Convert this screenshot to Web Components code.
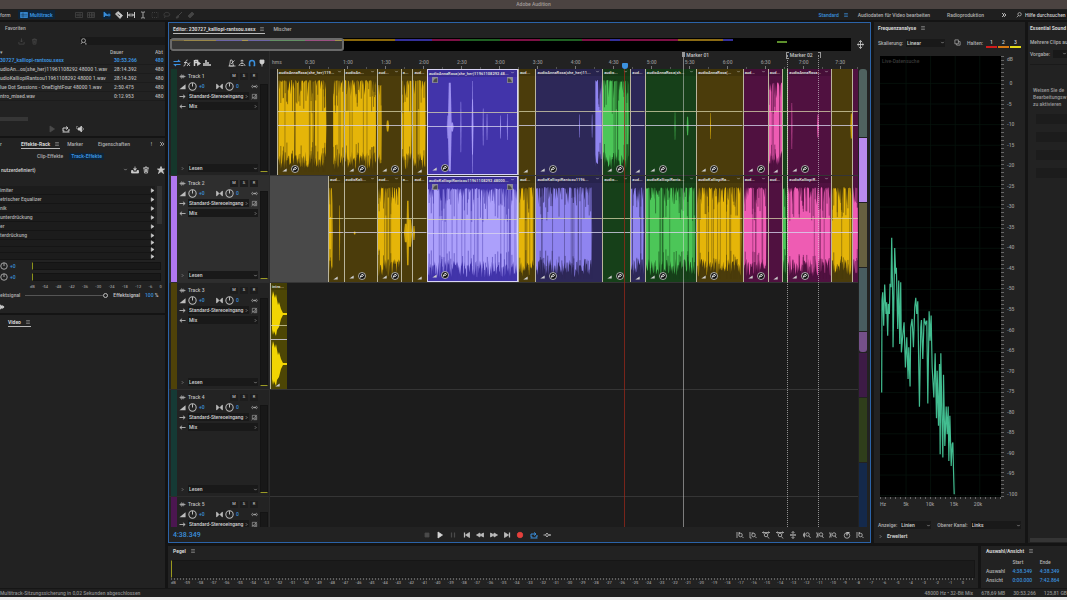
<!DOCTYPE html>
<html lang="de">
<head>
<meta charset="utf-8">
<meta name="viewport" content="width=device-width, initial-scale=1">
<title>Adobe Audition</title>
<style>
    html, body { margin: 0; height: 100%; background: #141414; }
    body {
        font-family: Roboto, "Liberation Sans", sans-serif;
        font-size: 5px;
        line-height: 8px;
        font-weight: 500;
        color: #b0b0b0;
        --panel: #222222;
        --dark: #191919;
        --blue: #3a8fdc;
    }
</style>
</head>
<body>
<audition-app></audition-app>

<script>
const ICONS = {
    menu: '<path d="M3 4h10M3 8h10M3 12h10"/>',
    down: '<path d="M4 6l4 4 4-4"/>',
    right: '<path d="M6 4l4 4-4 4"/>',
    more: '<path d="M3 3l5 5-5 5M8 3l5 5-5 5" stroke-width="2.4"/>',
    search: '<circle cx="9.500" cy="6" r="4.500"/><path d="M6.500 9.500L2 14"/>',
    find: '<circle cx="8" cy="6" r="4.500"/><path d="M5 9.500L2 14M11 10l3 3.500M12 14h3"/>',
    multitrack: '<path d="M1 3h14v10H1z" fill="currentColor"/><path d="M1 6.500h14M1 10h14M6 3v10" stroke="#0e2439" stroke-width="1"/>',
    wave: '<path d="M1 3h14v10H1zM4 6v4M6 5v6M8 6v4M10 4v8M12 6v4"/>',
    spectral: '<path d="M1 3h14v10H1zM1 8h14M5 3v10M9 3v10M12 3v10"/>',
    move: '<path d="M2 2v10l3-3h5z" fill="currentColor"/><path d="M9 8h6M12 5v6" stroke-width="2"/>',
    razor: '<path d="M1 6l5-5 9 8-5 6z" fill="currentColor"/><path d="M5 6l5 4" stroke="#222"/>',
    slip: '<path d="M1 2v12M15 2v12M3 8h10M6 5L3 8l3 3M10 5l3 3-3 3" stroke-width="2"/>',
    ibeam: '<path d="M4 2h3l1 1 1-1h3M4 14h3l1-1 1 1h3M8 3v10"/>',
    marquee: '<path d="M2 3h12v10H2z" stroke-dasharray="2 2"/>',
    lasso: '<path d="M3 10C0 6 4 2 9 3s6 6 2 7-5 0-7 0l-1 4"/>',
    brush: '<path d="M14 2L7 9M7 9c-3 0-3 3-5 5 4 0 6-1 5-5z" fill="currentColor" stroke-width="2"/>',
    heal: '<path d="M2 10l8-8 4 4-8 8z" fill="currentColor"/>',
    importer: '<path d="M8 1v8M5 6l3 3 3-3M2 9v5h12V9"/>',
    save: '<path d="M8 1v7M5 5l3 4 3-4" fill="currentColor"/><path d="M1 9h3v3h8V9h3v5H1z" fill="currentColor"/>',
    trash: '<path d="M2 4h12M6 4V2h4v2M4 4l1 10h6l1-10M7 6v6M9 6v6"/>',
    star: '<path d="M8 1l2 5h5l-4 3 2 6-5-4-5 4 2-6-4-3h5z" fill="currentColor"/>',
    play: '<path d="M4 2l9 6-9 6z" fill="currentColor"/>',
    stop: '<path d="M4 4h8v8H4z" fill="currentColor"/>',
    pause: '<path d="M5 3v10M11 3v10" stroke-width="2.5"/>',
    first: '<path d="M3 3v10" stroke-width="2.5"/><path d="M13 3v10L5 8z" fill="currentColor"/>',
    last: '<path d="M13 3v10" stroke-width="2.5"/><path d="M3 3v10l8-5z" fill="currentColor"/>',
    rewind: '<path d="M8 4v8L1 8zM15 4v8L8 8z" fill="currentColor"/>',
    forward: '<path d="M1 4v8l7-4zM8 4v8l7-4z" fill="currentColor"/>',
    record: '<circle cx="8" cy="8" r="5.500" fill="currentColor"/>',
    loop: '<path d="M5 12H2V6h9M11 12h3V8M8 3l4 3-4 3M1 14h14" stroke-width="2"/>',
    skip: '<path d="M1 8h4M11 8h4M8 4L5 8l3 4 3-4zM13 6l2 2-2 2" stroke-width="1.800"/>',
    speaker: '<path d="M4 6h3l4-4v12l-4-4H4z" fill="currentColor"/><path d="M13 5c2 2 2 4 0 6M1 2l2 2M0 6h2"/>',
    input: '<path d="M1 8h13M9 4l5 4-5 4" stroke-width="2"/>',
    output: '<path d="M2 8h13M7 4L2 8l5 4" stroke-width="2"/>',
    swap: '<path d="M1 5h12l-3-3M15 11H3l3 3" stroke-width="2.200"/>',
    fx: '<path d="M1 14c3 1 3-3 4-7s2-5 4-5M2 7h6M8 7l6 7M14 7l-6 7" stroke-width="1.800"/>',
    send: '<path d="M3 2v12M4 3h5v4H4" stroke-width="3"/><path d="M9 5l6 4-6 4z" fill="currentColor"/>',
    bars: '<path d="M2 14V8M6 14V2M10 14V6M14 14v-4" stroke-width="3"/>',
    metronome: '<path d="M3 14L5 2h3l3 12zM6 10l7-7M1 14h14"/>',
    snap: '<path d="M2 14c0-7 12-7 12 0M8 9V2M5 4l3-2 3 2M5 13h6"/>',
    magnet: '<path d="M3 14V8c0-7 10-7 10 0v6M2 13h3M11 13h3" stroke-width="3"/>',
    marker: '<path d="M4 2h8v5l-2 3H6L4 7z" fill="currentColor"/><path d="M8 9v6"/>',
    track: '<path d="M1 8h14M4 5v6M6 3v10M8 5v6M10 4v8M12 6v4" stroke-width="1.400"/>',
    volume: '<path d="M1 14L15 3v11z" fill="currentColor" stroke="none"/>',
    pan: '<path d="M2 3v10l5-5zM14 3v10L9 8z" fill="currentColor"/><path d="M1 2v12M15 2v12"/>',
    knob: '<circle cx="8" cy="8" r="6.500" stroke-width="1.800"/><path d="M8 8V2" stroke-width="1.800"/>',
    mono: '<path d="M4 5C1 6 1 10 4 11M12 5c3 1 3 5 0 6M5 8h6M7 6v4M10 6v4"/>',
    phase: '<path d="M3 3h8v8H3zM14 2L1 14M13 5v8H6" stroke-width="1.200"/>',
    ramp: '<path d="M1 14L15 5v9z" fill="currentColor" stroke="none"/>',
    stretch: '<circle cx="8" cy="8" r="7" fill="#101010" stroke="#d9d9d9" stroke-width="1.500"/><path d="M5 11c0-4 1-6 5-6 2 2 0 5-5 4" stroke="#fff" stroke-width="1.800"/>',
    corner: '<path d="M1 1h14v14H1z" fill="#8b8b8b" stroke="#aaa"/><path d="M3 14C4 7 8 3 14 3v11z" fill="#4a4a4a" stroke="none"/>',
    cornerOut: '<path d="M1 1h14v14H1z" fill="#8b8b8b" stroke="#aaa"/><path d="M13 14C12 7 8 3 2 3v11z" fill="#4a4a4a" stroke="none"/>',
    copy: '<path d="M2 2h8v9H2zM6 11v3h8V6h-4"/>',
    pin: '<path d="M8 1v14M2 8h12M5 4l3-3 3 3M5 12l3 3 3-3M4 6v4M12 6v4" stroke-width="1.500"/>',
    zoomIn: '<path d="M2 2v12M5 4h3M6.500 2v4"/><circle cx="9" cy="8" r="3.500"/><path d="M12 11l3 3"/>',
    zoomOut: '<path d="M2 2v12M5 4h4M2 14h3"/><circle cx="9" cy="8" r="3.500"/><path d="M12 11l3 3"/>',
    zoomTime: '<path d="M1 3h14M3 1L1 3l2 2M13 1l2 2-2 2"/><circle cx="8" cy="8" r="3.500"/><path d="M11 11l3 4"/>',
    zoomLeft: '<path d="M3 3v10M1 5v6"/><circle cx="9" cy="7" r="3.500"/><path d="M12 10l3 4"/>',
    zoomSel: '<path d="M1 3l2 5-2 5M4 3v10"/><circle cx="10" cy="7" r="3.500"/><path d="M12 10l3 4"/>',
    clock: '<circle cx="8" cy="9" r="5.500"/><path d="M8 9V3h5" stroke-width="2.500"/>',
    diamond: '<path d="M1 2v12l6-6z" fill="currentColor"/><path d="M7 4l4 4-4 4z" fill="currentColor"/>'
};

const RESET = `
    :host, * { box-sizing: border-box; }
    button, select, input {
        font: inherit; color: inherit; line-height: inherit; text-align: left;
        border: 0; background: none; padding: 0; margin: 0; border-radius: 0;
        appearance: none; min-width: 0; outline: 0;
    }
    input::-webkit-search-cancel-button { display: none; }
    button { display: flex; align-items: center; justify-content: center; }
    a { color: inherit; text-decoration: none; }
    .row { display: flex; align-items: center; }
    .grow { flex: 1; min-width: 0; }
    .blue { color: var(--blue); }
    .dim { color: #4a4a4a; }
    .bright { color: #d6d6d6; }
`;

class AuElement extends HTMLElement {
    connectedCallback() {
        if (this.shadowRoot) return;
        this.attachShadow({ mode: 'open' });
        this.shadowRoot.innerHTML = `<style>${RESET}${this.css()}</style>${this.html()}`;
    }
    css() { return ''; }
    html() { return '<slot></slot>'; }
}

class AuIcon extends AuElement {
    css() {
        return `
            :host { display: inline-flex; flex: none; width: var(--icon, 7px); height: var(--icon, 7px); }
            svg { width: 100%; height: 100%; }
        `;
    }
    html() {
        return `<svg viewBox="0 0 16 16" fill="none" stroke="currentColor" stroke-width="1.600" aria-hidden="true">${ICONS[this.getAttribute('name')]}</svg>`;
    }
}

const icon = name => `<au-icon name="${name}"></au-icon>`;

class AuTab extends AuElement {
    css() {
        return `
            :host { display: block; --icon: 6px; }
            button { gap: 4px; height: 10px; white-space: nowrap; border-bottom: 1px solid transparent; }
            :host([active]) button { color: #d6d6d6; font-weight: 700; }
            :host([underline]) button { border-color: #b9b9b9; }
            au-icon { color: #999; }
        `;
    }
    html() {
        return `<button type="button"><slot></slot>${this.hasAttribute('active') ? icon('menu') : ''}</button>`;
    }
}

class AuSelect extends AuElement {
    css() {
        return `
            :host { display: flex; align-items: center; background: var(--dark); height: 8px; min-width: 0; padding: 0 0 0 1px; color: #d2d2d2; --icon: 5px; }
            select { flex: 1; height: 8px; text-overflow: clip; }
        `;
    }
    html() {
        return `
            <select aria-label="${this.getAttribute('label')}"><option>${this.getAttribute('value')}</option></select>
            ${icon(this.getAttribute('arrow') || 'down')}
        `;
    }
}

class AppToolbar extends AuElement {
    css() {
        return `
            :host { display: flex; align-items: center; height: 11px; background: #1f1f1f; white-space: nowrap; --icon: 8px; }
            .mode { height: 9px; padding: 0 2px; gap: 2px; background: #0e2439; color: var(--blue); font-weight: 700; margin: 0 20px 0 7px; }
            .tools { display: flex; gap: 4px; color: #c9c9c9; }
            .tools .dim { color: #444; }
            .tools .on { background: #0e2439; color: var(--blue); }
            nav { display: flex; align-items: center; gap: 9px; margin-left: auto; --icon: 6px; }
            nav .gap { margin-left: 8px; }
            .help { display: flex; align-items: center; gap: 3px; width: 51px; color: #ddd; }
            input { flex: 1; background: var(--dark); height: 9px; }
            input::placeholder { color: #d0d0d0; opacity: 1; }
        `;
    }
    html() {
        const tool = (name, label, cls = '') => `<button type="button" class="${cls}" aria-label="${label}">${icon(name)}</button>`;
        return `
            <span>form</span>
            <button type="button" class="mode">${icon('multitrack')}Multitrack</button>
            <div class="tools">
                ${tool('wave', 'Wellenform', 'dim')}${tool('spectral', 'Spektral', 'dim')}<span></span>
                ${tool('move', 'Verschieben', 'on')}${tool('razor', 'Rasierklinge')}${tool('slip', 'Unterschieben')}${tool('ibeam', 'Zeitauswahl')}
                ${tool('marquee', 'Auswahlrechteck', 'dim')}${tool('lasso', 'Lasso', 'dim')}${tool('brush', 'Pinsel', 'dim')}${tool('heal', 'Reparatur', 'dim')}
            </div>
            <nav>
                <a href="#" class="blue row" style="gap:4px">Standard ${icon('menu')}</a>
                <a href="#">Audiodaten für Video bearbeiten</a>
                <a href="#" class="gap">Radioproduktion</a>
                <button type="button" class="gap bright" aria-label="Mehr">${icon('more')}</button>
                <label class="help">${icon('search')}<input type="search" placeholder="Hilfe durchsuchen" aria-label="Hilfe durchsuchen"></label>
            </nav>
        `;
    }
}

class FilesPanel extends AuElement {
    css() {
        return `
            :host { display: flex; flex-direction: column; height: 114px; background: var(--panel); overflow: hidden; white-space: nowrap; }
            .tab { padding: 2px 0 0 5px; height: 14px; }
            .find { height: 10px; gap: 6px; padding-left: 18px; }
            .find label { display: flex; align-items: center; flex: 1; margin-left: 36px; background: var(--dark); color: #ccc; height: 8px; --icon: 7px; }
            table { width: 100%; height: 51px; margin-top: 2px; border-collapse: collapse; table-layout: fixed; }
            th, td { padding: 0; text-align: left; font-weight: 500; overflow: hidden; line-height: 8px; border-bottom: 1px solid #1c1c1c; }
            td { color: #b6b6b6; }
            td:nth-child(2) { padding-left: 4px; }
            th { border: 0; }
            tr.open td { color: var(--blue); font-weight: 700; }
            .bar { height: 4px; width: 28px; background: #363636; margin-top: auto; }
            .play { height: 15px; gap: 6px; padding-left: 48px; color: #ccc; --icon: 8px; }
        `;
    }
    html() {
        const files = [
            ['30727_kalliopi-rantsou.sesx', '30:53.266'],
            ['udioAn...os(she_her)11961108292 48000 1.wav', '28:14.392'],
            ['udioKalliopiRantsou11961108292 48000 1.wav', '28:14.392'],
            ['lue Dot Sessions - OneEightFour 48000 1.wav', '2:50.475'],
            ['ntro_mixed.wav', '0:12.953']
        ];
        return `
            <div class="tab">Favoriten</div>
            <div class="row find dim">${icon('importer')}${icon('trash')}
                <label>${icon('find')}<input type="search" aria-label="Dateien suchen"></label>
            </div>
            <table>
                <colgroup><col><col style="width:45px"><col style="width:10px"></colgroup>
                <thead><tr><th>▾</th><th>Dauer</th><th>Abt</th></tr></thead>
                <tbody>${files.map((f, i) => `<tr class="${i ? '' : 'open'}"><td>${f[0]}</td><td>${f[1]}</td><td>480</td></tr>`).join('')}</tbody>
            </table>
            <div class="bar"></div>
            <div class="row play">
                <button type="button" class="dim" aria-label="Wiedergabe">${icon('play')}</button>
                <button type="button" aria-label="Schleife">${icon('loop')}</button>
                <button type="button" aria-label="Automatische Wiedergabe">${icon('speaker')}</button>
            </div>
        `;
    }
}

class EffectsRack extends AuElement {
    css() {
        return `
            :host { display: flex; flex-direction: column; height: 175px; background: var(--panel); overflow: hidden; white-space: nowrap; }
            .tabs { height: 12px; gap: 7px; --icon: 6px; }
            .sub { height: 12px; padding-left: 35px; gap: 4px; }
            .sub button { height: 7px; padding: 0 2px; }
            .sub .on { background: #0e2439; color: var(--blue); font-weight: 700; }
            .preset { height: 15px; gap: 3px; color: #ccc; --icon: 8px; }
            .preset au-select { width: 129px; background: none; }
            .preset au-icon:last-child { margin-left: 4px; }
            .list { display: flex; height: 74px; margin-top: 9px; }
            ul { flex: 1; margin: 0; padding: 0; list-style: none; display: flex; flex-direction: column; background: #1c1c1c; }
            li { flex: 1; display: flex; align-items: center; justify-content: space-between; border-bottom: 1px solid #151515; --icon: 5px; }
            li au-icon { color: #d0d0d0; }
            .thumb { width: 5px; height: 38px; margin: 0 3px 0 2px; background: #333; }
            .level { height: 11px; gap: 2px; --icon: 8px; }
            .level .blue { width: 20px; }
            .level div { flex: 1; height: 8px; margin-right: 4px; background: var(--dark); border: 1px solid #131313; border-left: 1px solid #8d9419; }
            .scale { display: flex; justify-content: space-between; padding: 0 3px 0 30px; font-size: 4px; height: 9px; align-items: end; color: #999; }
            .mix { height: 8px; gap: 5px; }
            .mix input { flex: 1; height: 6px; background: linear-gradient(#555, #555) center / 100% 1px no-repeat; }
            .mix input::-webkit-slider-thumb { appearance: none; width: 5px; height: 5px; border: 1px solid #bbb; border-radius: 50%; background: var(--panel); }
            .mix .bright { color: #ccc; }
            .end { margin-top: 5px; color: #ddd; --icon: 6px; }
        `;
    }
    html() {
        const rows = ['imiter', 'etrischer Equalizer', 'nik', 'unterdrückung', 'er', 'terdrückung', '', '', ''];
        const scale = ['dB', -54, -48, -42, -36, -30, -24, -18, -12, -6, 0];
        return `
            <div class="row tabs"><span style="width:14px">r</span><au-tab active underline>Effekte-Rack</au-tab><au-tab>Marker</au-tab>
                <au-tab class="grow" style="margin-left:8px">Eigenschaften</au-tab><span>!</span>${icon('more')}</div>
            <div class="row sub"><button type="button">Clip-Effekte</button><button type="button" class="on">Track-Effekte</button></div>
            <div class="row preset"><au-select label="Vorgabe" value="nutzerdefiniert)"></au-select>${icon('save')}${icon('trash')}${icon('star')}</div>
            <div class="list"><ul>${rows.map(r => `<li><span>${r}</span>${icon('play')}</li>`).join('')}</ul><div class="thumb"></div></div>
            <div>
                <div class="row level">${icon('knob')}<span class="blue">+0</span><div></div></div>
                <div class="row level">${icon('knob')}<span class="blue">+0</span><div></div></div>
            </div>
            <div class="scale">${scale.map(s => `<span>${s}</span>`).join('')}</div>
            <label class="row mix">ektsignal<input type="range" value="100" aria-label="Effektsignal">
                <span class="bright">Effektsignal</span><span class="bright" style="width:20px"><span class="blue">100</span> %</span></label>
            <div class="end">${icon('diamond')}</div>
        `;
    }
}

class TrackHeader extends AuElement {
    css() {
        return `
            :host { display: flex; flex: none; height: 107px; background: #232323; border-bottom: 1px solid #2d2d2d; color: #bdbdbd; --icon: 7px; }
            :host([selected]) { background: #2e2e2e; }
            .strip { width: 6px; margin-left: 2px; background: var(--track); }
            .body { flex: 1; display: flex; flex-direction: column; padding: 2px 2px 2px 2px; min-width: 0; }
            .row { height: 10px; gap: 2px; }
            .lead { width: 7px; display: flex; justify-content: center; }
            .btn { width: 8px; height: 7px; background: #1d1d1d; font-size: 4px; }
            .knob { --icon: 9px; display: flex; }
            .val { width: 15px; color: var(--blue); }
            .last { margin-top: auto; }
            .meter { width: 8px; margin: 15px 1px 3px 0; background: #181818; border: 1px solid #141414; border-bottom: 1px solid #9b9a25; }
        `;
    }
    html() {
        return `
            <div class="strip"></div>
            <div class="body">
                <div class="row">${icon('track')}<span class="grow">${this.getAttribute('name')}</span>
                    <button type="button" class="btn">M</button><button type="button" class="btn">S</button><button type="button" class="btn">R</button></div>
                <div class="row">${icon('volume')}<span class="knob">${icon('knob')}</span><span class="val">+0</span>
                    ${icon('pan')}<span class="knob">${icon('knob')}</span><span class="val grow">0</span>${icon('mono')}</div>
                <div class="row">${icon('input')}<au-select class="grow" label="Eingang" value="Standard-Stereoeingang" arrow="right"></au-select>${icon('phase')}</div>
                <div class="row">${icon('output')}<au-select class="grow" label="Ausgang" value="Mix" arrow="right"></au-select></div>
                <div class="row last"><span class="lead" style="--icon:5px">${icon('right')}</span><au-select class="grow" label="Automatisierung" value="Lesen"></au-select></div>
            </div>
            <div class="meter"></div>
        `;
    }
}

const COLORS = {
    y: ['#4b3c0b', '#e5b509'],
    p: ['#4234aa', '#aca0fb'],
    i: ['#2d2858', '#8f84f0'],
    g: ['#164019', '#4cc658'],
    m: ['#501140', '#ee5cb3'],
    a: ['#4d4605', '#f2d503']
};

function randomFrom(seed) {
    let s = seed * 7919 + 13;
    return () => (s = (s * 16807) % 2147483647) / 2147483647;
}

// Vertical needle shapes for dense passages, single slim diamonds for short peaks
function waveform(clip, seed) {
    const [bg, fg] = COLORS[clip.color];
    const rnd = randomFrom(seed);
    const mid = 57;
    let out = '';
    for (const [from, to, amp = 1] of clip.dense || []) {
        let top = '', bottom = '';
        for (let x = from; x <= to; x += 0.6) {
            const h = rnd() < 0.7 ? 0.96 + rnd() * 0.04 : 0.6 + rnd() * 0.35;
            const l = 0.55 + rnd() * 0.4;
            top += `L${x.toFixed(1)} ${(mid - 46 * amp * h).toFixed(1)}`;
            bottom = `L${x.toFixed(1)} ${(mid + 46 * amp * l).toFixed(1)}` + bottom;
        }
        out += `<path fill="${fg}" d="M${from} ${mid}${top}L${to} ${mid}${bottom}Z"/>`;
        for (let n = 0; n < (to - from) / 1.5; n++) {
            const x = from + rnd() * (to - from);
            const full = rnd() < 0.3;
            const y1 = mid - 47, y2 = full ? mid + 46 : mid - 12 - rnd() * 25;
            out += `<path stroke="${bg}" stroke-width=".7" opacity="${full ? 0.6 : 0.8}" d="M${x.toFixed(1)} ${y1}V${y2}"/>`;
            if (!full) out += `<path stroke="${bg}" stroke-width=".7" opacity=".8" d="M${x.toFixed(1)} ${mid + 46}V${mid + 16 + rnd() * 22}"/>`;
        }
    }
    for (const [x, amp, w = 1] of clip.peaks || []) {
        const h = 46 * amp;
        out += `<path fill="${fg}" opacity=".85" d="M${x - w / 4} ${mid - h}h${w / 2}L${x + w / 2} ${mid}L${x + w / 4} ${mid + h}h${-w / 2}L${x - w / 2} ${mid}Z"/>`;
    }
    if (clip.stereo) {
        for (const y of [31, 81]) {
            out += `<path fill="${fg}" d="M1 ${y - 17}L2 ${y - 23}L4 ${y - 16}L5 ${y - 20}L7 ${y - 9}L8 ${y - 12}L10 ${y - 5}L12 ${y - 1}H16V${y + 1}H12L10 ${y + 5}L8 ${y + 13}L6 ${y + 16}L5 ${y + 22}L3 ${y + 17}L2 ${y + 21}L1 ${y + 15}Z"/>`;
        }
    }
    return out;
}

class AuClip extends AuElement {
    css() {
        const [bg] = COLORS[this.clip.color];
        return `
            :host { display: block; position: relative; flex: ${this.clip.w} 1 0; min-width: 0; background: ${bg}; border-left: 1px solid #b9b49c; overflow: hidden; }
            :host([selected]) { border: 1px solid #d9d5f5; }
            svg.wave { position: absolute; inset: 0; width: 100%; height: 106px; }
            .name { position: relative; display: flex; justify-content: space-between; height: 7px; padding: 0 2px 0 1px; font-size: 4px; font-weight: 700; line-height: 7px; white-space: nowrap; color: #d8d8d8; background: rgba(0, 0, 0, .12); --icon: 5px; }
            .foot { position: absolute; left: 4px; bottom: 2px; display: flex; align-items: center; gap: 4px; color: #ccc; }
            .foot > :first-child { --icon: 5px; }
            .foot > :last-child:not(:first-child) { --icon: 8px; }
            .corners { position: relative; display: flex; justify-content: space-between; padding: 0 4px; --icon: 6px; }
        `;
    }
    html() {
        const c = this.clip;
        return `
            <svg class="wave" viewBox="0 0 ${c.w} 106" preserveAspectRatio="none" aria-hidden="true">${waveform(c, c.seed)}
                <path d="M0 42.500H${c.w}" stroke="#dcd9ae" stroke-width="1" opacity=".75"/>
                <path d="M0 56.500H${c.w}" stroke="#d7d4ee" stroke-width="1" opacity=".8"/></svg>
            ${c.name ? `<div class="name"><span>${c.name}</span>${c.w > 20 ? icon('down') : ''}</div>` : ''}
            ${c.color === 'p' ? `<div class="corners">${icon('corner')}${icon('cornerOut')}</div>` : ''}
            ${c.name && c.w > 11 ? `<div class="foot">${icon('ramp')}${c.w > 20 ? icon('stretch') : ''}</div>` : ''}
        `;
    }
}

const LANES = [
    [
        { gap: 7 },
        { w: 68, color: 'y', name: 'audioAnnaRosa(she_her)119...', dense: [[0, 17], [18, 37], [38, 50], [57, 68]] },
        { w: 33, color: 'y', name: 'audioAn...', dense: [[0, 32]] },
        { w: 24, color: 'y', name: 'aud...', dense: [[0, 4, .9]], peaks: [[10, .12, 3]] },
        { w: 11, color: 'y', name: 'a...', dense: [[0, 10]] },
        { w: 14, color: 'y', name: 'aud...', dense: [[0, 13]] },
        { w: 92, color: 'p', name: 'audioAnnaRosa(she_her)11961108292 48...', peaks: [[20, .25], [22.5, .96, 4], [25, .1, 3], [34, .55], [46, .6, 2], [46, 1], [57, .4], [61, .28], [75, .25], [82, .28]] },
        { w: 17, color: 'y', name: 'aud...' },
        { w: 68, color: 'i', name: 'audioAnnaRosa(she_her)11...', peaks: [[45, .25], [58, .25]], dense: [[61, 68]] },
        { w: 28, color: 'g', name: 'audio...', dense: [[0, 27]] },
        { w: 14, color: 'i', name: 'aud...' },
        { w: 52, color: 'g', name: 'audioAnnaRosa(sh...', peaks: [[30, .3], [43, .2, 2]] },
        { w: 47, color: 'y', name: 'audioAnnaRosa(...', peaks: [[14, .28]] },
        { w: 25, color: 'm', name: 'aud...' },
        { w: 14, color: 'm', name: 'aud...', dense: [[0, 14, .95]] },
        { w: 4, color: 'g' },
        { w: 44, color: 'm', name: 'audioAnnaRosa...', peaks: [[4, .5], [31, .25, 2]] },
        { w: 21, color: 'y', peaks: [[20, .27, 2]] },
        { w: 5, color: 'm' }
    ],
    [
        { gap: 60, fill: '#494949' },
        { w: 15, color: 'y', name: 'aud...', dense: [[0, 4]], peaks: [[11, .6]] },
        { w: 33, color: 'y', name: 'audioKali...', peaks: [[10, .03, 2]] },
        { w: 24, color: 'y', name: 'aud...', dense: [[0, 23]] },
        { w: 11, color: 'y', name: 'a...', peaks: [[4, .2, 4], [6, .7, 3], [8, .3, 5]] },
        { w: 14, color: 'y', name: 'aud...', peaks: [[1, .15, 2]] },
        { w: 92, color: 'p', name: 'audioKalliopiRantsou11961108292 48000...', dense: [[0, 92]] },
        { w: 17, color: 'y', name: 'aud...', dense: [[0, 15]] },
        { w: 68, color: 'i', name: 'audioKalliopiRantsou1196...', dense: [[0, 58]] },
        { w: 28, color: 'g', name: 'audio...' },
        { w: 14, color: 'i', name: 'aud...', dense: [[0, 13]] },
        { w: 52, color: 'g', name: 'audioKalliopiRants...', dense: [[0, 51]] },
        { w: 47, color: 'y', name: 'audioKalliopiRa...', dense: [[0, 46]] },
        { w: 25, color: 'm', name: 'aud...', dense: [[0, 23]] },
        { w: 14, color: 'm', name: 'aud...' },
        { w: 4, color: 'g', dense: [[0, 3]] },
        { w: 44, color: 'm', name: 'audioKalliopiR...', dense: [[0, 44]] },
        { w: 21, color: 'y', dense: [[0, 20]] },
        { w: 5, color: 'm', dense: [[0, 5]] }
    ],
    [{ w: 16, color: 'a', name: 'intro...', stereo: true }, { gap: 572 }],
    [],
    []
];

class TrackLane extends AuElement {
    css() {
        return `
            :host { display: flex; flex: none; height: 107px; background: #1c1c1c; border-bottom: 1px solid #353535; }
            .gap { min-width: 0; }
        `;
    }
    connectedCallback() {
        super.connectedCallback();
        const index = Number(this.getAttribute('index'));
        LANES[index].forEach((c, i) => {
            let el;
            if (c.gap) {
                el = document.createElement('div');
                el.className = 'gap';
                el.style.flex = `${c.gap} 1 0`;
                el.style.background = c.fill || 'none';
            } else {
                el = document.createElement('au-clip');
                el.clip = { ...c, seed: index * 40 + i + 3 };
                if (c.color === 'p') el.setAttribute('selected', '');
            }
            this.shadowRoot.append(el);
        });
    }
    html() { return ''; }
}

class TimeRuler extends AuElement {
    css() {
        return `
            :host { display: flex; flex: none; height: 18px; align-items: end; background: var(--panel); color: #8f8f8f; }
            div { flex: 30 1 0; min-width: 0; height: 14px; padding-top: 3px; text-align: center;
                background: linear-gradient(#777, #777) center bottom / 1px 3px no-repeat, linear-gradient(#555, #555) right bottom / 1px 2px no-repeat; }
            .unit { flex: 15 1 0; text-align: left; padding-left: 2px; background: none; }
            div:last-child { flex: 28 1 0; }
        `;
    }
    html() {
        let cells = '<div class="unit">hms</div>';
        for (let t = 30; t <= 450; t += 30) {
            cells += `<div>${Math.floor(t / 60)}:${String(t % 60).padStart(2, '0')}</div>`;
        }
        return cells;
    }
}

class EditorPanel extends AuElement {
    css() {
        return `
            :host { display: flex; flex-direction: column; min-width: 0; min-height: 0; background: var(--panel); border: 1px solid #2b63a8; overflow: hidden; }
            .tabs { height: 12px; gap: 8px; padding-left: 4px; }
            .overview { display: flex; height: 13px; margin: 3px 0 0 1px; align-items: center; }
            .strip { flex: 1; height: 13px; background: #000; padding-top: 1px; display: grid; grid-template-columns: 100%; }
            .strip > * { grid-area: 1 / 1; }
            .strip svg { width: 100%; height: 4px; }
            .view { width: 25%; min-width: 174px; height: 13px; margin-top: -1px; border: 2px solid #6a6a6a; border-radius: 3px; background: rgba(130, 130, 130, .42); }
            .fit { width: 19px; --icon: 9px; color: #ccc; }
            .time { flex: 1; display: grid; grid-template-columns: 101px minmax(0, 1fr) 12px; min-height: 0; }
            .heads, .canvas { display: flex; flex-direction: column; min-height: 0; overflow: hidden; }
            .heads { border-right: 1px solid #2b2b2b; }
            .tools { flex: none; height: 18px; padding: 6px 3px 0 4px; gap: 2px; color: #cfcfcf; --icon: 8px; }
            .canvas { position: relative; background: #1c1c1c; }
            .line { position: absolute; top: 4px; bottom: 0; border-left: 1px solid rgba(220, 220, 220, .5); }
            .line.dotted { border-left: 1px dotted rgba(220, 220, 220, .6); }
            .line span { position: absolute; left: 2px; top: -4px; color: #c5c5c5; white-space: nowrap; }
            .line.head { top: 14px; border-color: rgba(160, 40, 25, .7); }
            .line.flag::before { content: ""; position: absolute; left: -2px; top: -3px; width: 3px; height: 5px; background: #999; }
            .line.open::before, .line.close::before { content: ""; position: absolute; top: -3px; width: 2px; height: 5px; border: 1px solid #999; }
            .line.open::before { left: -2px; border-right: 0; }
            .line.close::before { left: -1px; border-left: 0; border-bottom: 0; }
            .line.head::before { content: ""; position: absolute; left: -3px; top: -2px; width: 6px; height: 6px; background: #3c92df; border-radius: 1px 1px 3px 3px; }
            .map { display: flex; flex-direction: column; margin: 18px 3px 0 1px; gap: 1px; }
            .map i { flex: 64 1 0; }
            .map i:first-child { border-radius: 3px 3px 0 0; }
            .map i:nth-child(5) { border-radius: 0 0 3px 3px; }
            .transport { display: flex; align-items: center; height: 15px; padding: 0 3px 0 4px; --icon: 8px; color: #bdbdbd; }
            .clock { width: 247px; font-size: 7px; color: var(--blue); font-weight: 500; }
            .group { display: grid; grid-template-columns: repeat(10, 1fr); width: 134px; }
            .group + .group { margin-left: auto; }
            .rec { color: #e5403c; }
        `;
    }
    html() {
        const strip = [[0, 14, '#6c5515'], [14, 46, '#a98a1f'], [46, 72, '#5c4fc0'], [72, 78, '#c9a62f'], [78, 100, '#5c4fc0'], [100, 135, '#4b9b4f'],
            [135, 165, '#ae2b80'], [165, 174, '#ba9d2c'], [174, 225, '#8a680b'], [225, 262, '#34309a'], [262, 290, '#7d1145'], [290, 330, '#1f6023'],
            [330, 370, '#7d1145'], [370, 412, '#1f6023'], [412, 440, '#7d1145'], [440, 450, '#34309a'], [450, 508, '#7d1145'], [508, 553, '#8b6b14'], [553, 563, '#34309a']];
        const tracks = [['#15372b', ''], ['#b077f0', 'selected'], ['#4f4209', ''], ['#153a35', ''], ['#4b1650', '']];
        const map = [[68, '#4f625f'], [64, '#b98aee'], [64, '#666040'], [64, '#485c60'], [20, '#75508a'], [44, '#3d1b46'], [64, '#2f3e1b'], [64, '#14294b']];
        const left = [['stop', 'Stopp', 'dim'], ['play', 'Wiedergabe', 'bright'], ['pause', 'Pause', 'dim'], ['first', 'Anfang'], ['rewind', 'Rückspulen'],
            ['forward', 'Vorspulen'], ['last', 'Ende'], ['record', 'Aufnahme', 'rec'], ['loop', 'Schleife', 'blue'], ['skip', 'Auswahl überspringen']];
        const right = ['zoomIn', 'zoomOut', 'zoomTime', 'zoomTime', 'pin', 'zoomLeft', 'zoomSel', 'zoomSel', 'clock', 'zoomIn'];
        return `
            <div class="row tabs"><au-tab active underline>Editor: 230727_kalliopi-rantsou.sesx</au-tab><au-tab>Mischer</au-tab></div>
            <div class="overview">
                <div class="strip"><svg viewBox="0 0 681 4" preserveAspectRatio="none" aria-hidden="true">
                    ${strip.map(s => `<rect x="${s[0]}" width="${s[1] - s[0]}" height="2" fill="${s[2]}"/>`).join('')}
                    <rect x="607" y="2" width="10" height="2" fill="#5d8f2c"/></svg><div class="view"></div></div>
                <button type="button" class="fit" aria-label="Verkleinern">${icon('pin')}</button>
            </div>
            <div class="time">
                <div class="heads">
                    <div class="row tools"><span class="blue row">${icon('swap')}</span>${icon('fx')}${icon('send')}${icon('bars')}<span class="grow"></span>
                        ${icon('metronome')}${icon('snap')}<span class="blue row">${icon('magnet')}</span>${icon('marker')}</div>
                    ${tracks.map((t, i) => `<track-header name="Track ${i + 1}" ${t[1]} style="--track:${t[0]}"></track-header>`).join('')}
                </div>
                <div class="canvas">
                    <time-ruler></time-ruler>
                    ${tracks.map((t, i) => `<track-lane index="${i}"></track-lane>`).join('')}
                    <div class="line flag" style="left:70.3%"><span>Marker 01</span></div>
                    <div class="line dotted open" style="left:87.9%"><span>Marker 02</span></div>
                    <div class="line dotted close" style="left:93.2%"></div>
                    <div class="line head" style="left:60.2%"></div>
                </div>
                <div class="map">${map.map(m => `<i style="flex-grow:${m[0]};background:${m[1]}"></i>`).join('')}</div>
            </div>
            <div class="transport">
                <div class="clock">4:38.349</div>
                <div class="group">${left.map(b => `<button type="button" aria-label="${b[1]}" class="${b[2] || ''}">${icon(b[0])}</button>`).join('')}</div>
                <div class="group">${right.map((n, i) => `<button type="button" aria-label="Zoom ${i + 1}">${icon(n)}</button>`).join('')}</div>
            </div>
        `;
    }
}

class FrequencyPanel extends AuElement {
    css() {
        return `
            :host { display: flex; flex-direction: column; min-width: 0; min-height: 0; background: var(--panel); padding: 1px 4px 1px 4px; white-space: nowrap; }
            .opts { height: 15px; margin-top: 2px; gap: 3px; --icon: 7px; }
            .opts au-select { width: 46px; }
            .hold { display: flex; gap: 1px; margin-left: auto; }
            .hold button { width: 11px; height: 10px; color: #ccc; border-bottom: 2px solid; }
            .plot { flex: 1; min-height: 0; display: grid; grid-template-columns: 121px 1fr; margin: 6px 0 0 2px; }
            .screen { position: relative; background: #000; }
            .screen svg { position: absolute; inset: 0; width: 100%; height: 100%; }
            .screen span { position: absolute; left: 2px; top: 1px; color: #3a3a3a; }
            .db { display: flex; flex-direction: column; line-height: 6px; padding-left: 6px; color: #999;
                background: repeating-linear-gradient(#666 0 1px, transparent 1px 4px) left / 3px 100% no-repeat; }
            .db div { flex: 1; display: flex; flex-direction: column; justify-content: space-between; margin-top: 18px; }
            .hz { display: grid; grid-template-columns: 14px repeat(4, 24px); height: 14px; margin-left: 2px; padding-top: 3px; margin-bottom: 9px; color: #999; text-align: center;
                background: repeating-linear-gradient(90deg, #666 0 1px, transparent 1px 5px) left top / 121px 2px no-repeat; }
            .hz span:first-child { text-align: left; }
            .show { height: 10px; gap: 3px; }
            .show au-select:first-of-type { width: 31px; margin-right: 3px; }
            .more { height: 12px; gap: 4px; color: #ccc; font-weight: 700; --icon: 5px; justify-content: flex-start; }
        `;
    }
    html() {
        const curve = '67,635 68,360 70,335 73,435 76,312 80,400 82,365 85,465 87,370 90,400 92,310 95,320 97,172 100,350 101,500 103,385 106,203 109,280 111,262 115,445 118,300 121,490 124,305 126,515 130,465 134,425 138,560 142,470 146,595 148,500 152,617 154,440 158,415 162,500 166,380 169,352 172,400 175,362 178,560 180,678 184,440 186,418 190,535 194,413 198,430 202,420 205,668 209,392 212,480 215,405 218,560 223,650 227,518 231,712 233,570 237,735 240,550 242,820 244,518 247,700 250,830 252,582 256,795 260,677 263,760 266,677 268,840 271,705 275,855 278,790 280,785 282,870 284,940';
        let grid = '';
        for (let y = -290; y < 948; y += 61.7) grid += `M62 ${y}H424`;
        for (let x = 140; x < 424; x += 73.5) grid += `M${x} -372V948`;
        let db = '';
        for (let v = 0; v >= -100; v -= 5) db += `<span>${v === 0 ? '&nbsp; 0' : v}</span>`;
        return `
            <au-tab active>Frequenzanalyse</au-tab>
            <div class="row opts">Skalierung:<au-select label="Skalierung" value="Linear"></au-select>
                <button type="button" aria-label="Kopieren" style="margin-left:6px">${icon('copy')}</button>
                <span style="margin-left:4px">Halten:</span>
                <div class="hold"><button type="button" style="border-color:#cf1d1d">1</button><button type="button" style="border-color:#d87912">2</button><button type="button" style="border-color:#e6dc18">3</button></div>
            </div>
            <div class="plot">
                <div class="screen"><svg viewBox="62 -372 362 1320" preserveAspectRatio="none" aria-hidden="true">
                    <path d="${grid}" stroke="#07170f" stroke-width="2" fill="none"/>
                    <polyline points="${curve}" fill="none" stroke="#42bd90" stroke-width="1.200" vector-effect="non-scaling-stroke"/></svg><span>Live-Datensuche</span></div>
                <div class="db">dB<div>${db}</div></div>
            </div>
            <div class="hz"><span>Hz</span><span>5k</span><span>10k</span><span>15k</span><span>20k</span></div>
            <div class="row show">Anzeige:<au-select label="Anzeige" value="Linien"></au-select>Oberer Kanal:<au-select class="grow" label="Oberer Kanal" value="Links"></au-select></div>
            <button type="button" class="more">${icon('right')}Erweitert</button>
        `;
    }
}

class SoundPanel extends AuElement {
    css() {
        return `
            :host { display: flex; flex-direction: column; min-width: 0; background: var(--panel); white-space: nowrap; overflow: hidden; padding: 2px 0 1px 2px; }
            .title { color: #d6d6d6; font-weight: 700; height: 14px; }
            .preset { height: 11px; gap: 3px; margin-top: 2px; }
            .hint { margin: 22px 0 6px 3px; line-height: 7px; color: #9b9b9b; }
            .slot { height: 10px; margin: 0 0 8px 6px; background: #1c1c1c; }
            .bar { height: 4px; margin-top: auto; background: #353535; }
            hr { border: 0; border-top: 1px solid #1a1a1a; width: 100%; margin: 5px 0 0; }
        `;
    }
    html() {
        return `
            <div class="title">Essential Sound</div>
            <div>Mehrere Clips au</div>
            <div class="row preset">Vorgabe:<au-select class="grow" label="Vorgabe" value=""></au-select></div>
            <hr>
            <div class="hint">Weisen Sie de<br>Bearbeitungsw<br>zu aktivieren</div>
            <div class="slot"></div><div class="slot"></div><div class="slot"></div><div class="slot"></div>
            <div class="bar"></div>
        `;
    }
}

class LevelPanel extends AuElement {
    css() {
        return `
            :host { display: flex; flex-direction: column; min-width: 0; background: var(--panel); padding: 0 3px; }
            au-tab { margin-left: 2px; }
            .meter { height: 18px; margin-top: 4px; background: #1b1b1b; border: 1px solid #161616; border-left: 1px solid #99981d; }
            .ticks { height: 2px; background: repeating-linear-gradient(90deg, #5e5e5e 0 1px, transparent 1px 3px); }
            .scale { display: grid; grid-template-columns: repeat(61, minmax(0, 1fr)); font-size: 4px; line-height: 6px; color: #999; }
            .scale span { white-space: nowrap; }
        `;
    }
    html() {
        let scale = '<span>dB</span>';
        for (let v = -59; v <= 0; v++) scale += `<span>${v}</span>`;
        return `<au-tab active>Pegel</au-tab><div class="meter"></div><div class="ticks"></div><div class="scale">${scale}</div>`;
    }
}

class SelectionPanel extends AuElement {
    css() {
        return `
            :host { display: block; background: var(--panel); padding: 0 0 0 5px; }
            table { border-collapse: collapse; width: 100%; margin-top: 2px; }
            th, td { padding: 0; text-align: left; font-weight: 500; line-height: 9px; }
            td { color: var(--blue); }
        `;
    }
    html() {
        return `
            <au-tab active>Auswahl/Ansicht</au-tab>
            <table>
                <tr><td></td><th scope="col">Start</th><th scope="col">Ende</th></tr>
                <tr><th scope="row">Auswahl</th><td>4:38.349</td><td>4:38.349</td></tr>
                <tr><th scope="row">Ansicht</th><td>0:00.000</td><td>7:42.864</td></tr>
            </table>
        `;
    }
}

class AuditionApp extends AuElement {
    css() {
        return `
            :host { display: flex; flex-direction: column; height: 100vh; overflow: hidden; border-bottom: 3px solid #ececec; }
            header { height: 9px; background: #4b4341; color: #a39d9b; text-align: center; line-height: 9px; }
            main { flex: 1; min-height: 0; display: grid; grid-template-columns: 165px minmax(0, 1fr); grid-template-rows: minmax(0, 1fr); gap: 3px; padding-top: 2px; }
            .left { display: flex; flex-direction: column; gap: 2px; min-height: 0; }
            .video { flex: 1; background: var(--panel); padding: 2px 8px; display: flex; align-items: flex-start; }
            .right { display: flex; flex-direction: column; gap: 3px; min-width: 0; min-height: 0; }
            .top { flex: 1; min-height: 0; display: grid; grid-template-columns: minmax(0, 1fr) 151px 39px; grid-template-rows: minmax(0, 1fr); gap: 3px; }
            .bottom { height: 42px; display: grid; grid-template-columns: minmax(0, 1fr) 86px; gap: 3px; }
            footer { display: flex; height: 9px; gap: 8px; background: #1f1f1f; border-top: 1px solid #161616; color: #8f8f8f; }
            footer span:first-child { margin-right: auto; }
        `;
    }
    html() {
        return `
            <header>Adobe Audition</header>
            <app-toolbar></app-toolbar>
            <main>
                <div class="left">
                    <files-panel></files-panel>
                    <effects-rack></effects-rack>
                    <div class="video"><au-tab active underline>Video</au-tab></div>
                </div>
                <div class="right">
                    <div class="top"><editor-panel></editor-panel><frequency-panel></frequency-panel><sound-panel></sound-panel></div>
                    <div class="bottom"><level-panel></level-panel><selection-panel></selection-panel></div>
                </div>
            </main>
            <footer><span>Multitrack-Sitzungssicherung in 0,02 Sekunden abgeschlossen</span><span>48000 Hz • 32-Bit Mix</span><span>678,69 MB</span><span>30:53.266</span><span>125,81 GB</span></footer>
        `;
    }
}

customElements.define('au-icon', AuIcon);
customElements.define('au-tab', AuTab);
customElements.define('au-select', AuSelect);
customElements.define('au-clip', AuClip);
customElements.define('app-toolbar', AppToolbar);
customElements.define('files-panel', FilesPanel);
customElements.define('effects-rack', EffectsRack);
customElements.define('track-header', TrackHeader);
customElements.define('track-lane', TrackLane);
customElements.define('time-ruler', TimeRuler);
customElements.define('editor-panel', EditorPanel);
customElements.define('frequency-panel', FrequencyPanel);
customElements.define('sound-panel', SoundPanel);
customElements.define('level-panel', LevelPanel);
customElements.define('selection-panel', SelectionPanel);
customElements.define('audition-app', AuditionApp);
</script>
</body>
</html>
